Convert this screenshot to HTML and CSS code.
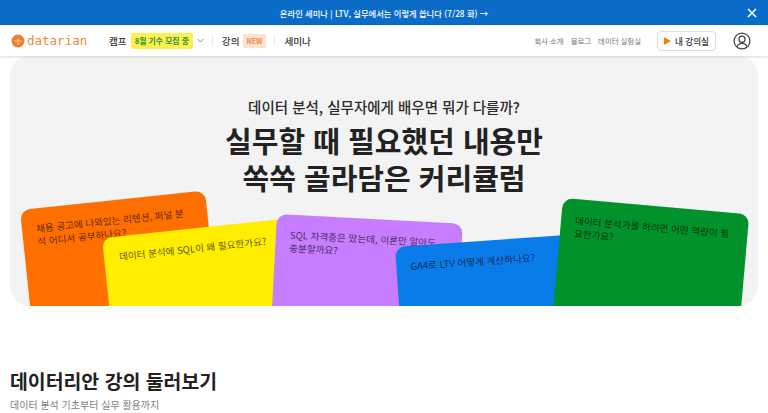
FILE: index.html
```html
<!DOCTYPE html>
<html lang="ko">
<head>
    <meta charset="UTF-8">
    <meta name="viewport" content="width=device-width, initial-scale=1.0">
    <title>datarian</title>
    <link rel="stylesheet" href="styles.css">
</head>
<body>
    <!-- Top Banner -->
    <div class="banner">
        <span class="banner-text">온라인 세미나 | LTV, 실무에서는 이렇게 씁니다 (7/28 화) →</span>
        <svg class="banner-close" width="10" height="10" viewBox="0 0 10 10">
            <path d="M1 1L9 9M9 1L1 9" stroke="#fff" stroke-width="1.6" fill="none"/>
        </svg>
    </div>

    <!-- Header -->
    <header class="header">
        <div class="logo">
            <svg width="14" height="14" viewBox="0 0 14 14">
                <circle cx="7" cy="7" r="6.5" fill="#ee7d2c"/>
                <path d="M3.5 7H10.5M7 4.5V10.5" stroke="#fbd9bd" stroke-width="1" fill="none"/>
            </svg>
            <span class="logo-text">datarian</span>
        </div>
        <nav class="nav">
            <span class="nav-item">캠프</span>
            <span class="camp-badge">8월 기수 모집 중</span>
            <svg class="nav-caret" width="7" height="5" viewBox="0 0 7 5">
                <path d="M0.5 1L3.5 4L6.5 1" stroke="#888" stroke-width="1" fill="none"/>
            </svg>
            <span class="nav-sep"></span>
            <span class="nav-item">강의</span>
            <span class="new-badge">NEW</span>
            <span class="nav-sep"></span>
            <span class="nav-item">세미나</span>
        </nav>
        <div class="header-right">
            <a class="sub-link">회사 소개</a>
            <a class="sub-link">블로그</a>
            <a class="sub-link">데이터 실험실</a>
            <button class="class-button">
                <svg width="7" height="8" viewBox="0 0 7 8"><path d="M0 0L7 4L0 8Z" fill="#ee7d1a"/></svg>
                내 강의실
            </button>
            <svg class="profile" width="18" height="18" viewBox="0 0 20 20">
                <circle cx="10" cy="10" r="8.8" stroke="#444" stroke-width="1.4" fill="none"/>
                <circle cx="10" cy="8" r="3.4" stroke="#444" stroke-width="1.4" fill="none"/>
                <path d="M4.5 16.2C5.5 13.5 7.5 12.6 10 12.6C12.5 12.6 14.5 13.5 15.5 16.2" stroke="#444" stroke-width="1.4" fill="none"/>
            </svg>
        </div>
    </header>

    <!-- Hero -->
    <section class="hero">
        <p class="hero-sub">데이터 분석, 실무자에게 배우면 뭐가 다를까?</p>
        <h1 class="hero-title">실무할 때 필요했던 내용만<br>쏙쏙 골라담은 커리큘럼</h1>
        <div class="card card-orange">채용 공고에 나와있는 리텐션, 퍼널 분석 어디서 공부하나요?</div>
        <div class="card card-yellow">데이터 분석에 SQL이 왜 필요한가요?</div>
        <div class="card card-purple">SQL 자격증은 땄는데, 이론만 알아도 충분할까요?</div>
        <div class="card card-blue">GA4로 LTV 어떻게 계산하나요?</div>
        <div class="card card-green">데이터 분석가를 하려면 어떤 역량이 필요한가요?</div>
    </section>

    <!-- Course List -->
    <section class="courses">
        <h2 class="courses-title">데이터리안 강의 둘러보기</h2>
        <p class="courses-sub">데이터 분석 기초부터 실무 활용까지</p>
    </section>
</body>
</html>
```

FILE: styles.css
```css
body {
    margin: 0;
    height: 413px;
    overflow: hidden;
    background: #fff;
    color: #222;
    font-family: 'Noto Sans CJK KR', 'Noto Sans', sans-serif;
}

/* Banner */
.banner {
    height: 25px;
    background: #0a6cc6;
    display: flex;
    align-items: center;
    justify-content: center;
    position: relative;
}
.banner-text {
    color: #fff;
    font-size: 8.3px;
    font-weight: 500;
}
.banner-close {
    position: absolute;
    right: 11px;
    top: 8px;
}

/* Header */
.header {
    height: 31px;
    display: flex;
    align-items: center;
    padding: 0 17px 0 11px;
    background: #fff;
    box-shadow: 0 1px 3px rgba(0, 0, 0, 0.15);
    position: relative;
    z-index: 2;
}
.logo {
    display: flex;
    align-items: center;
    gap: 2px;
    width: 98px;
}
.logo-text {
    font-family: 'DejaVu Sans Mono', monospace;
    font-size: 12.5px;
    color: #ee8a3c;
}
.nav {
    display: flex;
    align-items: center;
}
.nav-item {
    font-size: 9.6px;
    font-weight: 500;
    color: #333;
}
.camp-badge {
    background: #fdf04a;
    color: #2f8f4a;
    font-size: 7.8px;
    font-weight: 700;
    padding: 0 4px;
    height: 16px;
    line-height: 16px;
    border-radius: 2px;
    margin-left: 4px;
}
.nav-caret {
    margin-left: 4px;
}
.nav-sep {
    width: 1px;
    height: 9px;
    background: #e4e4e4;
    margin: 0 9px 0 8px;
}
.new-badge {
    background: #fde2d2;
    color: #ee8a4a;
    font-size: 7px;
    font-weight: 700;
    padding: 0 4px;
    height: 14px;
    line-height: 14px;
    border-radius: 2px;
    margin-left: 3px;
}
.header-right {
    margin-left: auto;
    display: flex;
    align-items: center;
}
.sub-link {
    font-size: 7.4px;
    color: #777;
    margin-right: 7px;
}
.class-button {
    display: flex;
    align-items: center;
    gap: 4px;
    height: 20px;
    padding: 0 6px 0 6px;
    margin-left: 9px;
    background: #fff;
    border: 1px solid #ddd;
    border-radius: 4px;
    font-family: inherit;
    font-size: 8.6px;
    font-weight: 500;
    color: #333;
}
.profile {
    margin-left: 17px;
}

/* Hero */
.hero {
    position: relative;
    height: 250px;
    margin: 0 10px;
    background: #f3f3f3;
    border-radius: 20px;
    overflow: hidden;
    text-align: center;
}
.hero-sub {
    margin: 0;
    padding-top: 39px;
    font-size: 14.5px;
    line-height: 24px;
    font-weight: 500;
    color: #2b2b2b;
}
.hero-title {
    margin: 3px 0 0;
    font-size: 29px;
    line-height: 37px;
    font-weight: 700;
    color: #222;
}
.card {
    position: absolute;
    width: 186px;
    height: 200px;
    padding: 14px 17px 0 14px;
    box-sizing: border-box;
    border-radius: 10px;
    transform-origin: top left;
    font-size: 9.6px;
    line-height: 13px;
    color: rgba(0, 0, 0, 0.68);
    text-align: left;
    word-break: break-all;
}
.card-orange {
    left: 10px;
    top: 154px;
    background: #ff6f00;
    transform: rotate(-6deg);
}
.card-yellow {
    left: 92px;
    top: 182px;
    width: 200px;
    padding-left: 15px;
    background: #ffee00;
    transform: rotate(-6deg);
}
.card-purple {
    left: 267px;
    top: 158px;
    background: #c77dff;
    transform: rotate(3deg);
}
.card-blue {
    left: 385px;
    top: 191px;
    background: #0a7cea;
    transform: rotate(-4deg);
}
.card-green {
    left: 553px;
    top: 142px;
    width: 187px;
    padding-top: 15px;
    background: #01922c;
    transform: rotate(5deg);
}

/* Courses */
.courses {
    padding: 60px 10px 0;
}
.courses-title {
    margin: 0;
    font-size: 19.4px;
    line-height: 30px;
    font-weight: 700;
    color: #222;
}
.courses-sub {
    margin: 2px 0 0;
    font-size: 10px;
    line-height: 14px;
    color: #808080;
}
```
